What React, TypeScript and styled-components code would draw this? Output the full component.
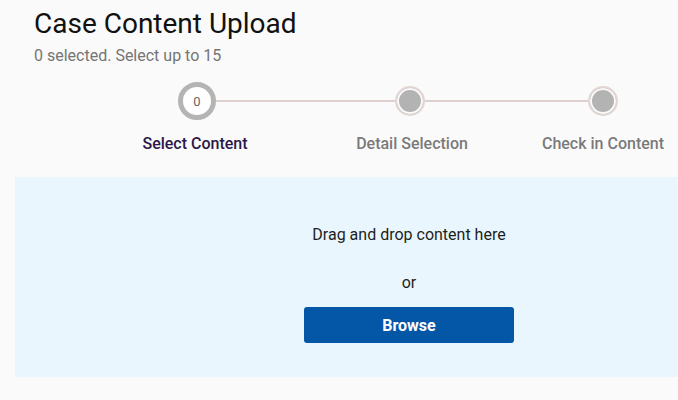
import * as React from 'react';
import styled, { createGlobalStyle } from 'styled-components';

const GlobalStyle = createGlobalStyle`
  html, body {
    margin: 0;
    padding: 0;
    background: #fafafa;
    font-family: Roboto, "Liberation Sans", Arial, sans-serif;
    overflow: hidden;
  }
`;

const Page = styled.div`
  width: 678px;
  height: 400px;
  padding-top: 8px;
  box-sizing: border-box;
  display: flex;
  flex-direction: column;
`;

const Header = styled.header`
  padding-left: 34px;
  display: flex;
  flex-direction: column;
`;

const Title = styled.h1`
  margin: 0;
  font-size: 28px;
  line-height: 32px;
  font-weight: 400;
  color: #111;
`;

const Subtitle = styled.div`
  margin-top: 6px;
  font-size: 16px;
  line-height: 20px;
  color: #757575;
`;

const CircleRow = styled.div`
  margin-top: 16px;
  margin-left: 178px;
  height: 38px;
  display: flex;
  align-items: center;
`;

const ActiveCircle = styled.div`
  width: 38px;
  height: 38px;
  box-sizing: border-box;
  border-radius: 50%;
  border: 5px solid #b4b4b4;
  background: #fff;
  display: flex;
  align-items: center;
  justify-content: center;
  font-size: 13px;
  color: #666;
`;

const PendingCircle = styled.div`
  width: 30px;
  height: 30px;
  box-sizing: border-box;
  border-radius: 50%;
  border: 2px solid #e2d6d3;
  background: #b3b3b3;
  box-shadow: inset 0 0 0 2px #fafafa;
`;

const Connector = styled.div<{ $width: number }>`
  width: ${(p) => p.$width}px;
  height: 2px;
  background: #ddd1ce;
`;

const LabelRow = styled.div`
  margin-top: 15px;
  margin-left: 96px;
  display: grid;
  grid-template-columns: 198px 236px 146px;
`;

const StepLabel = styled.div<{ $active?: boolean }>`
  text-align: center;
  white-space: nowrap;
  font-size: 16px;
  line-height: 18px;
  font-weight: 500;
  color: ${(p) => (p.$active ? '#2c1848' : '#7a7a7a')};
`;

const DropZone = styled.section`
  margin-top: 24px;
  margin-left: 15px;
  height: 200px;
  box-sizing: border-box;
  padding: 48px 0 0 125px;
  background: #e9f6fd;
  display: flex;
  flex-direction: column;
  align-items: center;
`;

const DropText = styled.div<{ $gap?: number }>`
  margin-top: ${(p) => p.$gap ?? 0}px;
  font-size: 16px;
  line-height: 20px;
  color: #1e1e1e;
`;

const BrowseButton = styled.button`
  margin-top: 14px;
  width: 210px;
  height: 36px;
  border: none;
  border-radius: 3px;
  background: #0457a7;
  color: #fff;
  font-family: inherit;
  font-size: 16px;
  font-weight: 700;
  cursor: pointer;
`;

export default function App() {
  return (
    <>
      <GlobalStyle />
      <Page>
        <Header>
          <Title>Case Content Upload</Title>
          <Subtitle>0 selected. Select up to 15</Subtitle>
        </Header>

        <CircleRow>
          <ActiveCircle>0</ActiveCircle>
          <Connector $width={179} />
          <PendingCircle />
          <Connector $width={163} />
          <PendingCircle />
        </CircleRow>

        <LabelRow>
          <StepLabel $active>Select Content</StepLabel>
          <StepLabel>Detail Selection</StepLabel>
          <StepLabel>Check in Content</StepLabel>
        </LabelRow>

        <DropZone>
          <DropText>Drag and drop content here</DropText>
          <DropText $gap={28}>or</DropText>
          <BrowseButton>Browse</BrowseButton>
        </DropZone>
      </Page>
    </>
  );
}
